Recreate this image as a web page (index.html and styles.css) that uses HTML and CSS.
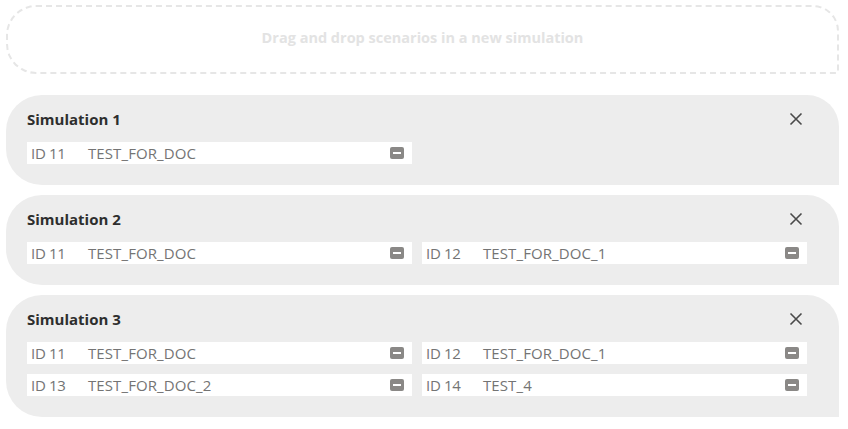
FILE: index.html
```html
<!DOCTYPE html>
<html>
<head>
<meta charset="utf-8">
<link rel="stylesheet" href="styles.css">
</head>
<body>
<div class="page">
  <div class="dropzone">Drag and drop scenarios in a new simulation</div>

  <div class="sim">
    <div class="sim-head">
      <span class="sim-title">Simulation 1</span>
      <svg class="close" width="14" height="14" viewBox="0 0 14 14"><path d="M1.5 1.5L12.5 12.5M12.5 1.5L1.5 12.5" stroke="#4a4a4a" stroke-width="1.6" fill="none"/></svg>
    </div>
    <div class="rows">
      <div class="row"><span class="rid">ID 11</span><span class="rname">TEST_FOR_DOC</span><span class="minus"></span></div>
    </div>
  </div>

  <div class="sim">
    <div class="sim-head">
      <span class="sim-title">Simulation 2</span>
      <svg class="close" width="14" height="14" viewBox="0 0 14 14"><path d="M1.5 1.5L12.5 12.5M12.5 1.5L1.5 12.5" stroke="#4a4a4a" stroke-width="1.6" fill="none"/></svg>
    </div>
    <div class="rows">
      <div class="row"><span class="rid">ID 11</span><span class="rname">TEST_FOR_DOC</span><span class="minus"></span></div>
      <div class="row"><span class="rid">ID 12</span><span class="rname">TEST_FOR_DOC_1</span><span class="minus"></span></div>
    </div>
  </div>

  <div class="sim">
    <div class="sim-head">
      <span class="sim-title">Simulation 3</span>
      <svg class="close" width="14" height="14" viewBox="0 0 14 14"><path d="M1.5 1.5L12.5 12.5M12.5 1.5L1.5 12.5" stroke="#4a4a4a" stroke-width="1.6" fill="none"/></svg>
    </div>
    <div class="rows">
      <div class="row"><span class="rid">ID 11</span><span class="rname">TEST_FOR_DOC</span><span class="minus"></span></div>
      <div class="row"><span class="rid">ID 12</span><span class="rname">TEST_FOR_DOC_1</span><span class="minus"></span></div>
      <div class="row"><span class="rid">ID 13</span><span class="rname">TEST_FOR_DOC_2</span><span class="minus"></span></div>
      <div class="row"><span class="rid">ID 14</span><span class="rname">TEST_4</span><span class="minus"></span></div>
    </div>
  </div>
</div>
</body>
</html>
```

FILE: styles.css
```css
* { box-sizing: border-box; }
html, body { margin: 0; padding: 0; background: #ffffff; }
body { font-family: "Open Sans", "Liberation Sans", sans-serif; }

.page {
  width: 833px;
  margin-left: 6px;
  padding-top: 5px;
  display: flex;
  flex-direction: column;
  gap: 10px;
}

.dropzone {
  height: 69px;
  border: 2px dashed #e6e6e6;
  border-radius: 30px 26px 2px 30px;
  display: flex;
  align-items: center;
  justify-content: center;
  color: #e3e3e3;
  font-weight: 700;
  font-size: 14.5px;
  margin-bottom: 11px;
  padding-bottom: 5px;
}

.sim {
  background: #ededed;
  border-radius: 36px 32px 0 36px;
  padding: 12px 32px 21px 21px;
}

.sim-head {
  height: 24px;
  display: flex;
  align-items: center;
  justify-content: space-between;
  margin-bottom: 11px;
}

.sim-title {
  font-weight: 700;
  font-size: 15px;
  color: #2e2e2e;
  letter-spacing: 0px;
}

.close { margin-right: 4px; }

.rows {
  display: grid;
  grid-template-columns: 385px 385px;
  column-gap: 10px;
  row-gap: 10px;
}

.row {
  height: 22px;
  background: #ffffff;
  display: flex;
  align-items: center;
  padding: 0 8px 0 4px;
  font-size: 15px;
  color: #747474;
}

.rid { width: 57px; letter-spacing: -0.3px; }
.rname { flex: 1; letter-spacing: 0.1px; }

.minus {
  width: 14px;
  height: 12px;
  background: #8a8886;
  border-radius: 2px;
  position: relative;
}
.minus::after {
  content: "";
  position: absolute;
  left: 3px;
  right: 3px;
  top: 5px;
  height: 2px;
  background: #ffffff;
}
```
